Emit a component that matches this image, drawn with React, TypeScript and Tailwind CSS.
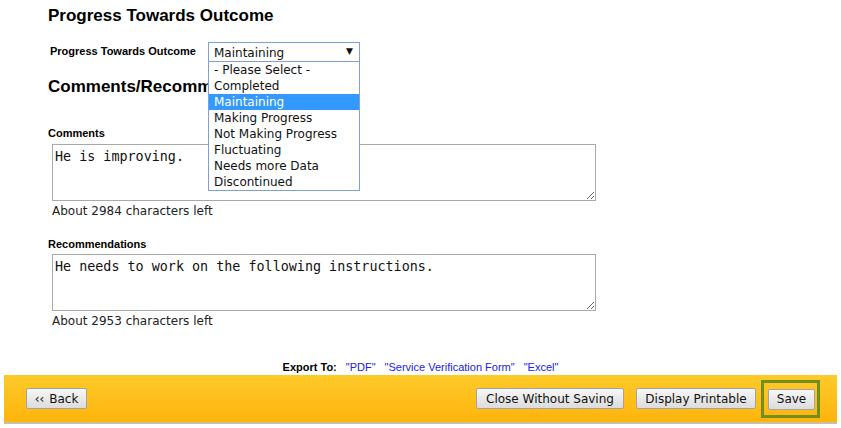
import React from "react";

const options = [
  "- Please Select -",
  "Completed",
  "Maintaining",
  "Making Progress",
  "Not Making Progress",
  "Fluctuating",
  "Needs more Data",
  "Discontinued",
];

function Btn({ w, children }: { w: string; children: React.ReactNode }) {
  return (
    <div
      className={`${w} h-[21px] flex items-center justify-center border border-[#a3a3a3] rounded-[2px] bg-gradient-to-b from-[#f7f7f7] to-[#dcdcdc] text-[12px] text-[#111] [font-family:'DejaVu_Sans',Verdana,sans-serif]`}
    >
      {children}
    </div>
  );
}

export default function App() {
  return (
    <div className="w-[841px] h-[428px] bg-white relative overflow-hidden [font-family:'Liberation_Sans',Arial,sans-serif] text-black">
      <div className="pl-[48px] pt-[5px]">
        <h1 className="text-[17px] font-bold leading-[22px]">Progress Towards Outcome</h1>
        <div className="mt-[15px] flex items-center h-[20px]">
          <div className="w-[160px] pl-[2px] text-[11px] font-bold leading-[14px] -mt-[2px]">
            Progress Towards Outcome
          </div>
          <div className="relative">
            <div className="w-[152px] h-[20px] border border-[#7f9fd8] flex items-center pl-[5px] pr-[6px] text-[12px] text-[#111] [font-family:'DejaVu_Sans',Verdana,sans-serif]">
              <span className="flex-1 pt-[1px]">Maintaining</span>
              <span className="text-[9px]">▼</span>
            </div>
            <div className="absolute left-0 top-[20px] w-[152px] border border-t-0 border-[#7f9fd8] bg-white z-10 [font-family:'DejaVu_Sans',Verdana,sans-serif] text-[12px] text-[#111]">
              {options.map((o) => (
                <div
                  key={o}
                  className={`h-[16px] leading-[16px] pl-[5px] ${o === "Maintaining" ? "bg-[#3399ff] text-white" : ""}`}
                >
                  {o}
                </div>
              ))}
            </div>
          </div>
        </div>
        <h2 className="mt-[14px] text-[17px] font-bold leading-[22px]">Comments/Recommendations</h2>
        <div className="mt-[28px] text-[11px] font-bold leading-[14px]">Comments</div>
        <textarea
          readOnly
          defaultValue="He is improving."
          className="block mt-[4px] ml-[4px] w-[544px] h-[57px] border border-[#a9a9a9] px-[2px] pt-[4px] text-[13.4px] leading-[16px] [font-family:'DejaVu_Sans_Mono','Liberation_Mono',monospace] text-[#111] outline-none"
        />
        <div className="mt-[2px] ml-[4px] text-[12px] leading-[16px] text-[#222] [font-family:'DejaVu_Sans',Verdana,sans-serif]">
          About 2984 characters left
        </div>
        <div className="mt-[18px] text-[11px] font-bold leading-[14px]">Recommendations</div>
        <textarea
          readOnly
          defaultValue="He needs to work on the following instructions."
          className="block mt-[3px] ml-[4px] w-[544px] h-[57px] border border-[#a9a9a9] px-[2px] pt-[4px] text-[13.4px] leading-[16px] [font-family:'DejaVu_Sans_Mono','Liberation_Mono',monospace] text-[#111] outline-none"
        />
        <div className="mt-[2px] ml-[4px] text-[12px] leading-[16px] text-[#222] [font-family:'DejaVu_Sans',Verdana,sans-serif]">
          About 2953 characters left
        </div>
      </div>
      <div className="mt-[31px] h-[14px] flex justify-center items-center text-[11px] leading-[14px]">
        <span className="font-bold mr-[9px]">Export To:</span>
        <span className="text-[#2020ee] mr-[9px]">"PDF"</span>
        <span className="text-[#2020ee] mr-[9px]">"Service Verification Form"</span>
        <span className="text-[#2020ee]">"Excel"</span>
      </div>
      <div className="mt-[1px] ml-[4px] w-[833px] h-[49px] bg-gradient-to-b from-[#fdca28] to-[#ffb408] border-b-2 border-[#c9c0a8] flex items-center pl-[22px] pr-[17px]">
        <Btn w="w-[61px]">
          <span className="text-[12px] mr-[5px]">‹‹</span>Back
        </Btn>
        <div className="flex-1" />
        <Btn w="w-[148px]">Close Without Saving</Btn>
        <div className="w-[12px]" />
        <Btn w="w-[120px]">Display Printable</Btn>
        <div className="w-[5px]" />
        <div className="w-[59px] h-[38px] border-[3px] border-[#708f1e] pl-[4px] pt-[6px]">
          <Btn w="w-[47px]">Save</Btn>
        </div>
      </div>
    </div>
  );
}
